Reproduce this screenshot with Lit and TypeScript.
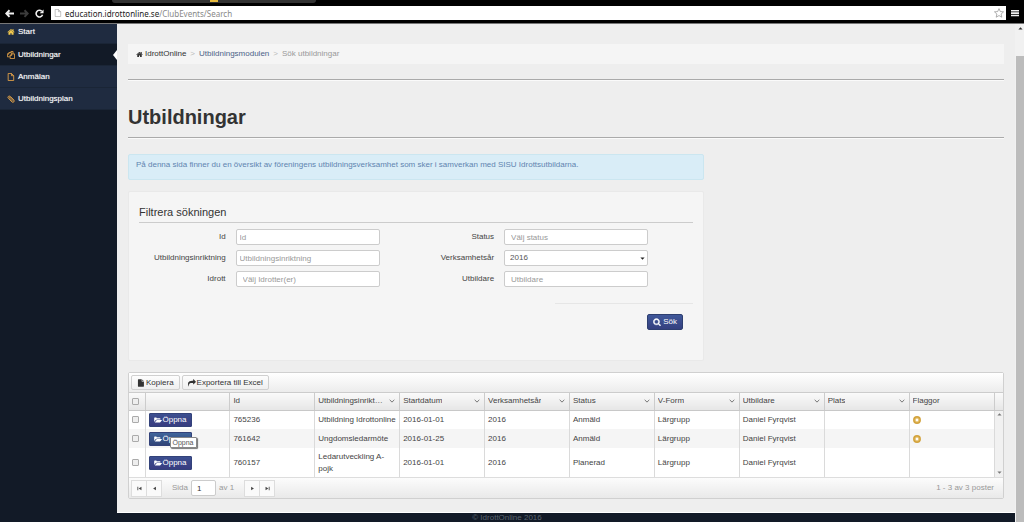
import { LitElement, html, css, svg } from "lit";
import { customElement } from "lit/decorators.js";
import { classMap } from "lit/directives/class-map.js";

const HOME = svg`<path d="M1472 992v480q0 26-19 45t-45 19h-384v-384h-256v384h-384q-26 0-45-19t-19-45v-480q0-1 .5-3t.5-3l575-474 575 474q1 2 1 6zm223-69l-62 74q-8 9-21 11h-3q-13 0-21-7l-692-577-692 577q-12 8-24 7-13-2-21-11l-62-74q-8-10-7-23.500t11-21.500l719-599q32-26 76-26t76 26l244 204v-195q0-14 9-23t23-9h192q14 0 23 9t9 23v408l219 182q10 8 11 21.500t-7 23.500z"/>`;
const SEARCH = svg`<path stroke="currentColor" stroke-width="90" d="M1216 832q0-185-131.500-316.500t-316.500-131.500-316.500 131.500-131.500 316.500 131.500 316.500 316.500 131.500 316.500-131.500 131.500-316.500zm512 832q0 52-38 90t-90 38q-54 0-90-38l-343-342q-179 124-399 124-143 0-273.500-55.500t-225-150-150-225-55.500-273.500 55.500-273.500 150-225 225-150 273.500-55.500 273.500 55.500 225 150 150 225 55.500 273.500q0 220-124 399l343 343q37 37 37 90z"/>`;
const SHARE = svg`<path d="M1792 640q0 26-19 45l-512 512q-19 19-45 19t-45-19-19-45v-256h-224q-98 0-175.500 6t-154 21.500-133 42.500-105.500 69.500-80 101-48.500 138.500-17.500 181q0 55 5 123 0 6 2.500 23.500t2.500 26.500q0 15-8.500 25t-23.500 10q-16 0-28-17-7-9-13-22t-13.500-30-10.500-24q-127-285-127-451 0-199 53-333 162-403 875-403h224v-256q0-26 19-45t45-19 45 19l512 512q19 19 19 45z"/>`;
const FILES = svg`<path fill="none" stroke="currentColor" stroke-width="190" stroke-linejoin="round" d="M640 1300H90V700L420 370H1000V640M420 370V700H90M700 1000L1050 650H1700V1700H700zM1050 650V1000H700M640 370L900 90H1350V600"/>`;
const FILE_O = svg`<path fill="none" stroke="currentColor" stroke-width="190" stroke-linejoin="round" d="M260 100H1000L1500 600V1690H260zM1000 100V600H1500"/>`;
const CLIP = svg`<g fill="none" stroke="currentColor" stroke-width="210" stroke-linecap="round"><path d="M1450 1100L720 330Q500 120 300 320T310 730L1120 1560Q1350 1730 1530 1540T1500 1130L850 470Q700 360 580 480T600 700L1190 1310"/></g>`;
const FILE = svg`<path d="M1050 520V60H300q-90 0-90 90V1640q0 90 90 90H1460q90 0 90-90V620H1150q-100 0-100-100zM1190 90V480H1540z"/>`;
const FOLDER = svg`<path d="M1780 930q0 30-35 75L1410 1410q-60 70-160 70H160L480 1060q70-180 220-180H1700q80 0 80 50zM1450 600V770H700q-200 0-320 150L40 1330V420q0-110 110-110H480q120 0 120 130v50H1340q110 0 110 110z"/>`;
const BACK = svg`<path d="M0 900L760 100 1040 380 700 700H1792V1100H700L1040 1420 760 1700z"/>`;
const FORWARD = svg`<path d="M1792 900L1032 100 752 380 1092 700H0V1100H1092L752 1420 1032 1700z"/>`;
const RELOAD = svg`<path fill="none" stroke="currentColor" stroke-width="310" d="M1500 1150A660 660 0 1 1 1330 430"/><path d="M1700 80V850H930z"/>`;
const PAGE = svg`<path fill="#fff" stroke="#999" stroke-width="130" d="M260 100H1000L1500 600V1690H260zM1000 100V600H1500"/>`;
const STAR = svg`<path fill="none" stroke="currentColor" stroke-width="120" stroke-linejoin="round" d="M896 110L1130 640 1710 690 1270 1080 1400 1650 896 1350 392 1650 522 1080 82 690 662 640z"/>`;
const MENU = svg`<path d="M0 200H1792V560H0zM0 740H1792V1100H0zM0 1280H1792V1640H0z"/>`;
const CHEVRON = svg`<path fill="none" stroke="currentColor" stroke-width="240" d="M200 550L896 1240 1592 550"/>`;
const UP = svg`<path d="M896 450L1650 1250H142z"/>`;
const DOWN = svg`<path d="M896 1350L1650 550H142z"/>`;
const PREV = svg`<path d="M1400 250V1540L400 896z"/>`;
const NEXT = svg`<path d="M400 250V1540L1400 896z"/>`;
const FIRST = svg`<path d="M150 250H450V1540H150zM1600 250V1540L600 896z"/>`;
const LAST = svg`<path d="M1342 250H1642V1540H1342zM192 250V1540L1192 896z"/>`;
const FLAG = svg`<circle cx="896" cy="896" r="880" fill="#d2a23c"/><circle cx="896" cy="896" r="560" fill="#e3bb62"/><path fill="#fff" d="M896 480L1260 896 896 1312 532 896z"/>`;

const icon = (shape: unknown, cls = "") =>
  html`<svg class="icon ${cls}" viewBox="0 0 1792 1792" aria-hidden="true">${shape}</svg>`;

const NAV = [
  { text: "Start", shape: HOME, active: false },
  { text: "Utbildningar", shape: FILES, active: true },
  { text: "Anmälan", shape: FILE_O, active: false },
  { text: "Utbildningsplan", shape: CLIP, active: false },
];

const COLUMNS = [
  { text: "Id", menu: false },
  { text: "Utbildningsinriktning", menu: true },
  { text: "Startdatum", menu: true },
  { text: "Verksamhetsår", menu: true },
  { text: "Status", menu: true },
  { text: "V-Form", menu: true },
  { text: "Utbildare", menu: true },
  { text: "Plats", menu: true },
  { text: "Flaggor", menu: false },
];

const ROWS = [
  { cells: ["765236", "Utbildning Idrottonline", "2016-01-01", "2016", "Anmäld", "Lärgrupp", "Daniel Fyrqvist", ""], flag: true, hover: false },
  { cells: ["761642", "Ungdomsledarmöte", "2016-01-25", "2016", "Anmäld", "Lärgrupp", "Daniel Fyrqvist", ""], flag: true, hover: true },
  { cells: ["760157", "Ledarutveckling A-pojk", "2016-01-01", "2016", "Planerad", "Lärgrupp", "Daniel Fyrqvist", ""], flag: false, hover: false },
];

const base = css`
  * { box-sizing: border-box; }
  .icon { width: 8px; height: 8px; fill: currentColor; flex: none; display: block; }
  button, input, select { font: inherit; color: inherit; margin: 0; }
  a { color: inherit; text-decoration: none; }
`;

@customElement("browser-bar")
export class BrowserBar extends LitElement {
  static styles = [base, css`
    :host { display: block; background: #000; color: #f0f0f0; font: 8px/13px "Noto Sans", "Open Sans", sans-serif; }
    .tabs { height: 4px; padding: 0 64px 0 112px; display: flex; justify-content: space-between; }
    .tab { width: 204px; height: 3px; background: #333; border-radius: 0 0 4px 4px; display: flex; justify-content: center; }
    .mark { width: 8px; height: 2px; background: #e6b93c; }
    .bar { display: flex; align-items: center; height: 20px; padding: 0 5px 1px 5px; border-bottom: 1px solid #777; }
    .tool { border: 0; padding: 0; background: none; display: flex; margin-right: 6px; }
    .tool.dim { color: #3c3c3c; }
    .tool .icon { width: 9px; height: 9px; }
    .address { flex: 1; min-width: 0; height: 14px; margin: 0 5px 0 1px; background: #fff; display: flex; align-items: center; padding: 0 2px 0 3px; gap: 3px; color: #888; }
    .url { flex: 1; white-space: nowrap; overflow: hidden; }
    .host { color: #222; }
    .address .star { width: 10px; height: 10px; color: #888; }
  `];
  render() {
    return html`
      <div class="tabs"><span class="tab"><i class="mark"></i></span></div>
      <div class="bar">
        <button class="tool" aria-label="Bakåt">${icon(BACK)}</button>
        <button class="tool dim" aria-label="Framåt">${icon(FORWARD)}</button>
        <button class="tool" aria-label="Ladda om">${icon(RELOAD)}</button>
        <div class="address">
          ${icon(PAGE)}
          <span class="url"><span class="host">education.idrottonline.se</span>/ClubEvents/Search</span>
          ${icon(STAR, "star")}
        </div>
        ${icon(MENU)}
      </div>`;
  }
}

@customElement("side-nav")
export class SideNav extends LitElement {
  static styles = [base, css`
    :host { display: block; overflow: hidden; background: #121a27; color: #fff; }
    .list { list-style: none; margin: -3px 0 0; padding: 0; }
    .item { height: 22px; background: #1f2b40; border-bottom: 1px solid #1a2536; position: relative; }
    .item:first-child { height: 23px; }
    .item.active { background: #121a27; }
    .item.active::after { content: ""; position: absolute; right: 0; top: 6px; border: 5px solid transparent; border-right: 4px solid #fff; border-left: 0; }
    .link { display: flex; align-items: center; gap: 3px; height: 100%; padding-left: 7px; text-shadow: 0 0 1px #fff8; }
    .icon { color: #e8a548; }
    .item:first-child .icon { color: #f3c94d; }
  `];
  render() {
    return html`<ul class="list">${NAV.map((n) => html`
      <li class="item ${classMap({ active: n.active })}"><a class="link" href="#">${icon(n.shape)}${n.text}</a></li>`)}
    </ul>`;
  }
}

@customElement("filter-panel")
export class FilterPanel extends LitElement {
  static styles = [base, css`
    :host { display: block; }
    .panel { background: #f5f5f5; border: 1px solid #e9e9e9; border-radius: 2px; padding: 12px 10px 30px; }
    .title { margin: 0 0 6px; font-size: 11px; line-height: 16px; font-weight: 400; padding-bottom: 2px; border-bottom: 1px solid #ccc; color: #333; }
    .fields { display: grid; grid-template-columns: 1fr 1fr; row-gap: 5px; padding-right: 17px; }
    .field { display: grid; grid-template-columns: 36% 1fr; column-gap: 10px; padding-right: 28px; align-items: center; }
    .label { text-align: right; white-space: nowrap; }
    .control { position: relative; display: block; }
    .box { display: block; width: 100%; height: 16px; border: 1px solid #ccc; border-radius: 2px; background: #fff; padding: 0 3px; color: #555; appearance: none; outline: 0; }
    .box.inset { padding: 0 6px; }
    .box.pick { padding: 0 5px; }
    .box::placeholder { color: #999; opacity: 1; }
    .arrow { position: absolute; right: 3px; top: 6px; width: 5px; height: 5px; color: #222; }
    .actions { margin: 16px 0 0 auto; width: 25%; border-top: 1px solid #e6e6e6; padding: 10px 10px 0 0; display: flex; justify-content: flex-end; }
    .search { height: 16px; display: flex; align-items: center; gap: 2px; padding: 0 5px; border: 1px solid #2e3f70; border-radius: 2px; color: #fff; background: linear-gradient(#40589a, #35407f); }
  `];
  text(id: string, label: string, hint: string, inset: boolean) {
    return html`<div class="field"><label class="label" for=${id}>${label}</label>
      <input class="box ${classMap({ inset })}" id=${id} type="text" placeholder=${hint} /></div>`;
  }
  render() {
    return html`
      <form class="panel" @submit=${(e: Event) => e.preventDefault()}>
        <h2 class="title">Filtrera sökningen</h2>
        <div class="fields">
          ${this.text("id", "Id", "Id", false)}
          ${this.text("status", "Status", "Välj status", true)}
          ${this.text("focus", "Utbildningsinriktning", "Utbildningsinriktning", false)}
          <div class="field"><label class="label" for="year">Verksamhetsår</label>
            <span class="control"><select class="box pick" id="year"><option>2016</option></select>${icon(DOWN, "arrow")}</span></div>
          ${this.text("sport", "Idrott", "Välj Idrotter(er)", true)}
          ${this.text("trainer", "Utbildare", "Utbildare", true)}
        </div>
        <div class="actions"><button class="search">${icon(SEARCH)}Sök</button></div>
      </form>`;
  }
}

@customElement("event-grid")
export class EventGrid extends LitElement {
  static styles = [base, css`
    :host { display: block; border: 1px solid #d0d0d0; border-radius: 2px; background: #fff; color: #444; }
    .toolbar { display: flex; gap: 2px; padding: 2px; height: 20px; background: linear-gradient(#fff, #ececec); border-bottom: 1px solid #ccc; }
    .tool { display: flex; align-items: center; gap: 1px; padding: 0 5px; border: 1px solid #d0d0d0; border-radius: 2px; background: linear-gradient(#fdfdfd, #efefef); color: #333; }
    .table { width: 100%; border-collapse: collapse; table-layout: fixed; }
    .check-col { width: 16px; }
    .scroll-col { width: 9px; }
    th, td { text-align: left; font-weight: 400; padding: 0 1px 0 3px; border-right: 1px solid #dadada; overflow: hidden; }
    th { height: 17px; background: linear-gradient(#fafafa, #e6e6e6); border-right-color: #ccc; border-bottom: 1px solid #c8c8c8; }
    td { height: 19px; line-height: 12px; }
    th:last-child, .rail { border-right: 0; }
    .row:nth-child(even) td { background: #f5f5f5; }
    .row:last-child td { height: 29px; }
    .head { display: flex; align-items: center; justify-content: space-between; padding-right: 3px; }
    .head .text { overflow: hidden; text-overflow: ellipsis; white-space: nowrap; max-width: 66px; }
    .head .icon { width: 6px; height: 6px; color: #555; }
    .check { appearance: none; display: block; width: 7px; height: 7px; border: 1px solid #aaa; border-radius: 1px; background: #eee; margin: 0; }
    .action { overflow: visible; position: relative; }
    .open { display: flex; align-items: center; gap: 1px; height: 14px; padding: 0 4px; border: 1px solid #33427a; border-radius: 1px; color: #fff; background: linear-gradient(#3c4f90, #383c80); }
    .open.hover { background: linear-gradient(#40659b, #2f4377); }
    .tip { position: absolute; left: 24px; top: 8px; z-index: 1; padding: 0 2px; line-height: 9px; font-size: 7px; background: #fff; border: 1px solid #888; border-radius: 1px; box-shadow: 1px 1px 1px #0008; color: #555; }
    .row:nth-child(n) .rail { padding: 0 2px; background: #f1f1f1; color: #777; }
    .arrows { display: flex; flex-direction: column; justify-content: space-between; height: 63px; }
    .arrows .icon { width: 5px; height: 5px; }
    .pager { display: flex; align-items: center; height: 21px; padding: 1px 9px 1px 2px; border-top: 1px solid #ddd; background: linear-gradient(#fcfcfc, #e9e9e9); color: #999; }
    .group { display: flex; }
    .step { width: 16px; height: 17px; display: flex; align-items: center; justify-content: center; padding: 0; border: 1px solid #ddd; margin-right: -1px; background: #fafafa; color: #444; }
    .step .icon { width: 5px; height: 5px; }
    .page { display: flex; align-items: center; gap: 3px; margin: 0 10px 0 11px; }
    .number { width: 25px; height: 16px; border: 1px solid #ccc; border-radius: 2px; background: #fff; padding: 0 5px; color: #333; }
    .total { margin-left: auto; }
  `];
  render() {
    return html`
      <div class="toolbar">
        <button class="tool">${icon(FILE)}Kopiera</button>
        <button class="tool">${icon(SHARE)}Exportera till Excel</button>
      </div>
      <table class="table">
        <colgroup><col class="check-col" /><col span="10" /><col class="scroll-col" /></colgroup>
        <thead><tr>
          <th><input class="check" type="checkbox" aria-label="Markera alla" /></th>
          <th></th>
          ${COLUMNS.map((c) => html`<th><div class="head"><span class="text">${c.text}</span>${c.menu ? icon(CHEVRON) : ""}</div></th>`)}
          <th></th>
        </tr></thead>
        <tbody>${ROWS.map((r, i) => html`
          <tr class="row">
            <td><input class="check" type="checkbox" aria-label="Markera ${r.cells[0]}" /></td>
            <td class="action"><button class="open ${classMap({ hover: r.hover })}">${icon(FOLDER)}Öppna</button>
              ${r.hover ? html`<span class="tip" role="tooltip">Öppna</span>` : ""}</td>
            ${r.cells.map((c) => html`<td>${c}</td>`)}
            <td>${r.flag ? icon(FLAG) : ""}</td>
            ${i === 0 ? html`<td class="rail" rowspan="3"><div class="arrows">${icon(UP)}${icon(DOWN)}</div></td>` : ""}
          </tr>`)}
        </tbody>
      </table>
      <div class="pager">
        <div class="group">
          <button class="step" aria-label="Första">${icon(FIRST)}</button>
          <button class="step" aria-label="Föregående">${icon(PREV)}</button>
        </div>
        <div class="page"><label for="page">Sida</label><input class="number" id="page" type="text" .value=${"1"} />av 1</div>
        <div class="group">
          <button class="step" aria-label="Nästa">${icon(NEXT)}</button>
          <button class="step" aria-label="Sista">${icon(LAST)}</button>
        </div>
        <span class="total">1 - 3 av 3 poster</span>
      </div>`;
  }
}

@customElement("app-root")
export class AppRoot extends LitElement {
  static styles = [base, css`
    :host { display: flex; flex-direction: column; min-height: 100vh; background: #121a27; font: 8px/12px "Liberation Sans", Arial, sans-serif; color: #444; }
    .body { flex: 1; display: grid; grid-template-columns: 117px minmax(0, 1fr) 9px; }
    .page { display: flex; flex-direction: column; }
    .content { flex: 1; background: #eee; border-bottom: 1px solid #fff; padding: 20px 11px 12px; }
    .crumbs { display: flex; align-items: center; gap: 4px; height: 20px; padding: 0 8px; background: #f5f5f5; }
    .home { display: flex; align-items: center; gap: 2px; color: #333; }
    .home .icon { width: 7px; height: 7px; }
    .link { color: #4c6287; }
    .sep { color: #bbb; }
    .here { color: #999; }
    .rule { border: 0; border-top: 1px solid #aaa; border-bottom: 1px solid #fafafa; margin: 15px 0 0; }
    .title { margin: 24px 0 0; font-size: 20px; line-height: 24px; font-weight: 700; color: #333; }
    .rule.after { margin-top: 8px; }
    .columns { display: grid; grid-template-columns: 2fr 1fr; column-gap: 12px; margin: 15px 0 11px; }
    .info { margin: 0 0 11px; padding: 4px 7px 8px; min-height: 26px; background: #d9edf7; border: 1px solid #cbe6f0; border-radius: 2px; color: #5f84b0; }
    .foot { height: 9px; line-height: 9px; text-align: center; color: #5a6470; padding-right: 118px; }
    .scroll { background: #f1f1f1; padding: 2px 0 0 1px; display: flex; flex-direction: column; align-items: center; color: #333; }
    .scroll .icon { width: 5px; height: 5px; }
    .thumb { flex: 1; align-self: stretch; margin-top: 25px; background: #bcbcbc; }
  `];
  render() {
    return html`
      <browser-bar></browser-bar>
      <div class="body">
        <side-nav></side-nav>
        <div class="page">
          <main class="content">
            <nav class="crumbs">
              <a class="home" href="#">${icon(HOME)}IdrottOnline</a><span class="sep">&gt;</span>
              <a class="link" href="#">Utbildningsmodulen</a><span class="sep">&gt;</span>
              <span class="here">Sök utbildningar</span>
            </nav>
            <hr class="rule" />
            <h1 class="title">Utbildningar</h1>
            <hr class="rule after" />
            <div class="columns"><div>
              <p class="info">På denna sida finner du en översikt av föreningens utbildningsverksamhet som sker i samverkan med SISU Idrottsutbildarna.</p>
              <filter-panel></filter-panel>
            </div></div>
            <event-grid></event-grid>
          </main>
          <footer class="foot">© IdrottOnline 2016</footer>
        </div>
        <div class="scroll">${icon(UP)}<span class="thumb"></span></div>
      </div>`;
  }
}
